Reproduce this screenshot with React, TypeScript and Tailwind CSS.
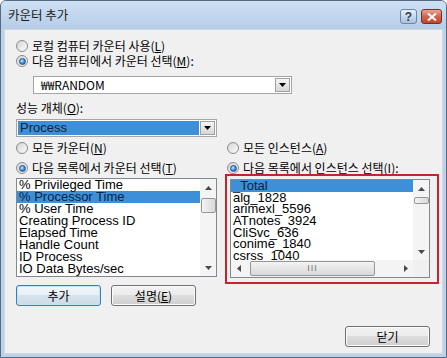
import React from "react";

const kr = "font-['Noto_Sans_CJK_KR','Liberation_Sans',sans-serif]";
const lat = "font-['Liberation_Sans','Noto_Sans_CJK_KR',sans-serif]";

function Radio({ checked }: { checked?: boolean }) {
  return (
    <span className="w-[12px] h-[12px] rounded-full border border-[#8b8b8b] bg-[linear-gradient(135deg,#d5d5d5,#fcfcfc)] flex items-center justify-center shrink-0">
      {checked && (
        <span className="w-[7px] h-[7px] rounded-full border border-[#1d4d84] bg-[radial-gradient(circle_at_35%_35%,#c4e8ff_0%,#3f8fdc_55%,#1b4f92_100%)]" />
      )}
    </span>
  );
}

function RadioRow({ checked, children, className = "" }: { checked?: boolean; children: React.ReactNode; className?: string }) {
  return (
    <div className={"h-[14px] flex items-center gap-[4px] " + className}>
      <Radio checked={checked} />
      <span className="leading-[14px] whitespace-nowrap">{children}</span>
    </div>
  );
}

function U({ children }: { children: React.ReactNode }) {
  return <span className="underline underline-offset-[1px]">{children}</span>;
}

function DropBtn() {
  return (
    <div className="w-[15px] h-full border border-[#a0a0a0] bg-gradient-to-b from-[#f6f6f6] to-[#d6d6d6] flex items-center justify-center shrink-0">
      <svg width="7" height="4" viewBox="0 0 7 4">
        <path d="M0 0h7L3.5 4z" fill="#000" />
      </svg>
    </div>
  );
}

function Arrow({ dir }: { dir: "up" | "down" | "left" | "right" }) {
  const d =
    dir === "up" ? "M0 4h7L3.5 0z" : dir === "down" ? "M0 0h7L3.5 4z" : dir === "left" ? "M4 0v7L0 3.5z" : "M0 0v7L4 3.5z";
  const w = dir === "up" || dir === "down" ? 7 : 4;
  const h = dir === "up" || dir === "down" ? 4 : 7;
  return (
    <svg width={w} height={h} viewBox={`0 0 ${w} ${h}`}>
      <path d={d} fill="#4a4a4a" />
    </svg>
  );
}

function VScroll({ thumbMt, thumbH }: { thumbMt: number; thumbH: number }) {
  return (
    <div className="w-[16px] h-full bg-[#f4f4f4] flex flex-col items-center shrink-0">
      <div className="h-[17px] w-full flex items-center justify-center shrink-0">
        <Arrow dir="up" />
      </div>
      <div className="flex-1 w-full flex flex-col items-center">
        <div
          className="w-[15px] rounded-[2px] border border-[#979797] bg-gradient-to-r from-[#f3f3f3] to-[#d9d9d9]"
          style={{ marginTop: thumbMt, height: thumbH }}
        />
      </div>
      <div className="h-[17px] w-full flex items-center justify-center shrink-0">
        <Arrow dir="down" />
      </div>
    </div>
  );
}

function Btn({ children, def }: { children: React.ReactNode; def?: boolean }) {
  return (
    <div
      className={
        def
          ? "h-[21px] w-[85px] rounded-[3px] border border-[#3c7fb1] shadow-[inset_0_0_0_1px_#bfe3f7] bg-[linear-gradient(#f0f6fa_0%,#e8f0f5_50%,#d6e3ec_50%,#cddbe6_100%)] flex items-center justify-center"
          : "h-[21px] w-[85px] rounded-[3px] border border-[#707070] shadow-[inset_0_0_0_1px_#fbfbfb] bg-[linear-gradient(#f2f2f2_0%,#ebebeb_50%,#dddddd_50%,#cfcfcf_100%)] flex items-center justify-center"
      }
    >
      <span className="leading-[14px]">{children}</span>
    </div>
  );
}

const counters = [
  "% Privileged Time",
  "% Processor Time",
  "% User Time",
  "Creating Process ID",
  "Elapsed Time",
  "Handle Count",
  "ID Process",
  "IO Data Bytes/sec",
];

const instances = ["_Total", "alg_1828", "arimexl_5596", "ATnotes_3924", "CliSvc_636", "conime_1840", "csrss_1040"];

export default function App() {
  return (
    <div className={"w-[447px] h-[358px] flex flex-col bg-[#bcd2ea] border border-[#566a82] rounded-t-[6px] overflow-hidden text-[12px] text-black " + kr}>
      {/* Title bar */}
      <div className="h-[28px] flex items-start pl-[7px] pr-[4px] bg-gradient-to-b from-[#cfe0f2] to-[#b6cde8] shrink-0">
        <span className="text-[12.5px] leading-[14px] mt-[7px] text-[#1e1e1e]">카운터 추가</span>
        <div className="ml-auto mt-[8px] flex gap-[4px]">
          <div className="w-[17px] h-[15px] rounded-[3px] border border-[#6a86a8] bg-gradient-to-b from-[#e6eff8] to-[#a9c2df] flex items-center justify-center">
            <span className={"text-[12px] leading-[12px] font-bold text-[#2d3f57] " + lat}>?</span>
          </div>
          <div className="w-[21px] h-[15px] rounded-[3px] border border-[#7a2d22] bg-gradient-to-b from-[#e9a596] via-[#d0654f] to-[#c0432b] flex items-center justify-center">
            <svg width="10" height="8" viewBox="0 0 10 8">
              <path d="M1 0.5l8 7M9 0.5l-8 7" stroke="#fff" strokeWidth="2" />
            </svg>
          </div>
        </div>
      </div>

      {/* Body */}
      <div className="flex-1 mx-[3px] mb-[3px] bg-[#f0f0f0] border border-[#cdd8e4] flex flex-col pl-[11px] pt-[9px]">
        <RadioRow>
          로컬 컴퓨터 카운터 사용(<U>L</U>)
        </RadioRow>
        <RadioRow checked className="mt-[1px]">
          다음 컴퓨터에서 카운터 선택(<U>M</U>):
        </RadioRow>
        <div className="ml-[17px] mt-[8px] h-[18px] w-[259px] border border-[#a5a5a5] bg-white flex p-[1px]">
          <span className="flex-1 pl-[6px] leading-[14px]">₩₩RANDOM</span>
          <DropBtn />
        </div>
        <div className="mt-[7px] h-[14px] leading-[14px]">
          성능 개체(<U>O</U>):
        </div>
        <div className="mt-[4px] h-[18px] w-[201px] border border-[#a5a5a5] bg-white flex p-[1px] gap-[1px]">
          <span className={"flex-1 bg-[#3d8fd8] text-[#0c2440] pl-[2px] text-[13px] leading-[14px] " + lat}>Process</span>
          <DropBtn />
        </div>

        <div className="mt-[4px] flex">
          {/* left column */}
          <div className="w-[201px] flex flex-col">
            <RadioRow>
              모든 카운터(<U>N</U>)
            </RadioRow>
            <RadioRow checked className="mt-[6px]">
              다음 목록에서 카운터 선택(<U>T</U>)
            </RadioRow>
            <div className="mt-[3px] h-[99px] border border-[#828790] bg-white flex">
              <div className={"flex-1 overflow-hidden text-[13px] leading-[12px] " + lat}>
                {counters.map((c, i) => (
                  <div
                    key={c}
                    className={i === 1 ? "h-[12px] bg-[#3d8fd8] text-[#0c2440] pl-[2px] whitespace-nowrap" : "h-[12px] pl-[2px] whitespace-nowrap"}
                  >
                    {c}
                  </div>
                ))}
              </div>
              <VScroll thumbMt={2} thumbH={15} />
            </div>
            <div className="mt-[8px] flex gap-[10px]">
              <Btn def>추가</Btn>
              <Btn>
                설명(<U>E</U>)
              </Btn>
            </div>
          </div>

          {/* right column */}
          <div className="ml-[8px] w-[214px] flex flex-col">
            <RadioRow className="ml-[2px]">
              모든 인스턴스(<U>A</U>)
            </RadioRow>
            <RadioRow checked className="ml-[2px] mt-[6px]">
              다음 목록에서 인스턴스 선택(<U>I</U>):
            </RadioRow>
            <div className="mt-[-1px] h-[110px] border-2 border-[#c1262c] pl-[3px] pr-[7px] pt-[3px] pb-[4px]">
              <div className="h-full border border-[#828790] bg-white flex flex-col">
                <div className="flex-1 flex min-h-0">
                  <div className={"flex-1 overflow-hidden text-[13px] leading-[11.7px] " + lat}>
                    {instances.map((c, i) => (
                      <div
                        key={c}
                        className={i === 0 ? "h-[11.7px] bg-[#3d8fd8] text-[#0c2440] pl-[2px] whitespace-nowrap" : "h-[11.7px] pl-[2px] whitespace-nowrap"}
                      >
                        {c}
                      </div>
                    ))}
                  </div>
                  <VScroll thumbMt={0} thumbH={7} />
                </div>
                <div className="h-[17px] flex bg-[#f4f4f4] shrink-0">
                  <div className="flex-1 flex items-center">
                    <div className="w-[16px] flex justify-center">
                      <Arrow dir="left" />
                    </div>
                    <div className="ml-[3px] w-[125px] h-[15px] rounded-[2px] border border-[#979797] bg-gradient-to-b from-[#f3f3f3] to-[#d9d9d9] flex items-center justify-center">
                      <span className={"text-[9px] leading-[9px] text-[#777] tracking-[1px] " + lat}>III</span>
                    </div>
                    <div className="ml-auto w-[14px] flex justify-center">
                      <Arrow dir="right" />
                    </div>
                  </div>
                  <div className="w-[16px] bg-[#f0f0f0]" />
                </div>
              </div>
            </div>
          </div>
        </div>

        <div className="mt-[20px] self-end mr-[12px]">
          <Btn>닫기</Btn>
        </div>
      </div>
    </div>
  );
}
